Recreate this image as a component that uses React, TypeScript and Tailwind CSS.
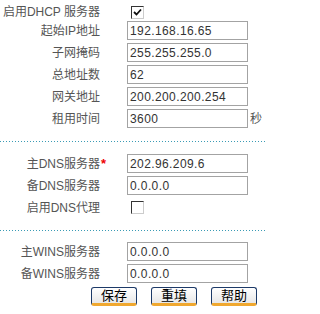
import React from "react";

const font = {
  fontFamily: '"Liberation Sans", "Noto Sans CJK SC", sans-serif',
};

function Label({ text, star }: { text: string; star?: boolean }) {
  return (
    <div className="flex w-[127px] shrink-0 items-center">
      <span className="w-[100px] whitespace-nowrap text-right text-[12px] leading-none text-[#555]">
        {text}
      </span>
      {star && (
        <span className="ml-[1px] text-[13px] font-bold leading-none text-[#e00]">
          *
        </span>
      )}
    </div>
  );
}

function InputRow({
  label,
  value,
  star,
  suffix,
  first,
}: {
  label: string;
  value: string;
  star?: boolean;
  suffix?: string;
  first?: boolean;
}) {
  return (
    <div className={`flex h-[19px] items-center ${first ? "" : "mt-[3px]"}`}>
      <Label text={label} star={star} />
      <div className="flex h-[19px] w-[121px] items-center border border-[#a3a3a3] bg-white pl-[2px] text-[12px] leading-none tracking-[0.4px] text-[#333]">
        {value}
      </div>
      {suffix && (
        <span className="ml-[2px] text-[12px] leading-none text-[#555]">
          {suffix}
        </span>
      )}
    </div>
  );
}

function CheckRow({
  label,
  checked,
  className,
}: {
  label: string;
  checked?: boolean;
  className?: string;
}) {
  return (
    <div className={`flex items-center ${className ?? ""}`}>
      <Label text={label} />
      <div className="ml-[4px] flex h-[13px] w-[13px] items-center justify-center border border-[#333] border-r-[#ccc] border-b-[#ccc] bg-white">
        {checked && (
          <svg width="9" height="9" viewBox="0 0 9 9">
            <path
              d="M1 4 L3.5 6.5 L8 1.5"
              fill="none"
              stroke="#111"
              strokeWidth="1.8"
            />
          </svg>
        )}
      </div>
    </div>
  );
}

function Divider({ className }: { className?: string }) {
  return (
    <div
      className={`h-[1px] w-full bg-[linear-gradient(to_right,#3a9bb5_1px,transparent_1px)] bg-[length:3px_1px] ${className ?? ""}`}
    />
  );
}

function Btn({ text }: { text: string }) {
  return (
    <button className="flex h-[19px] w-[46px] items-center justify-center rounded-[3px] border border-[#1d3a68] border-b-[3px] border-b-[#f0a830] bg-gradient-to-b from-white to-[#e8e8e8] text-[13px] leading-none text-black">
      {text}
    </button>
  );
}

export default function App() {
  return (
    <div className="h-[314px] w-[265px] overflow-hidden bg-white pt-[3px]" style={font}>
      <CheckRow label="启用DHCP 服务器" checked className="h-[18px]" />
      <InputRow label="起始IP地址" value="192.168.16.65" first />
      <InputRow label="子网掩码" value="255.255.255.0" />
      <InputRow label="总地址数" value="62" />
      <InputRow label="网关地址" value="200.200.200.254" />
      <InputRow label="租用时间" value="3600" suffix="秒" />

      <Divider className="mt-[13px]" />

      <div className="mt-[12px]">
        <InputRow label="主DNS服务器" value="202.96.209.6" star first />
        <InputRow label="备DNS服务器" value="0.0.0.0" />
        <CheckRow label="启用DNS代理" className="mt-[3px] h-[19px]" />
      </div>

      <Divider className="mt-[13px]" />

      <div className="mt-[11px]">
        <InputRow label="主WINS服务器" value="0.0.0.0" first />
        <InputRow label="备WINS服务器" value="0.0.0.0" />
      </div>

      <div className="mt-[4px] flex gap-[14px] pl-[91px]">
        <Btn text="保存" />
        <Btn text="重填" />
        <Btn text="帮助" />
      </div>
    </div>
  );
}
